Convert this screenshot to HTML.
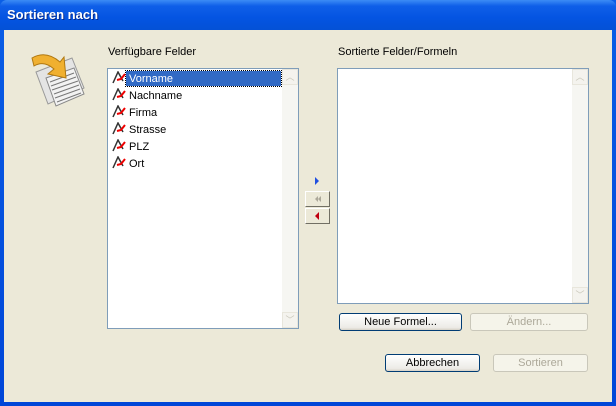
<html><head><style>
body{margin:0;width:616px;height:406px;overflow:hidden;font-family:"Liberation Sans",sans-serif;font-size:11px;}
.win{position:absolute;left:0;top:0;width:616px;height:406px;background:linear-gradient(#0a5ee6,#0046d8);}
.title{position:absolute;left:0;top:0;width:616px;height:30px;background:linear-gradient(#3c8cf5 0,#0f5fe8 20%,#0454e2 60%,#0451d6 100%);border-radius:7px 7px 0 0;}
.title span{position:absolute;left:7px;top:7px;color:#fff;font-weight:bold;font-size:13px;text-shadow:1px 1px #0a2a8a;font-family:"Liberation Sans",sans-serif;}
.client{position:absolute;left:4px;top:30px;width:608px;height:372px;background:#ece9d8;}
.a{position:absolute;}
.list{position:absolute;background:#fff;border:1px solid #7f9db9;}
.sb{position:absolute;right:0;top:0;width:16px;bottom:0;background:#f6f6f2;}
.sbtn{position:absolute;left:0;width:16px;height:16px;background:#f4f3ee;border:1px solid #e8e6dc;box-sizing:border-box;color:#c9c7ba;font-size:9px;text-align:center;line-height:14px;}
.item{position:absolute;left:4px;height:16px;line-height:16px;}
.item i{display:inline-block;width:14px;height:13px;vertical-align:-2px;margin-right:3px;}
.btn{position:absolute;border:1px solid #003c74;border-radius:3px;background:linear-gradient(#fff,#ecebe6 85%,#d6d0c5);text-align:center;box-sizing:border-box;line-height:16px;}
.dis{border-color:#c9c7ba;color:#aca899;background:#f5f4ea;}
.ab{position:absolute;width:25px;height:16px;border:1px solid #fff;border-right-color:#716f64;border-bottom-color:#716f64;box-sizing:border-box;background:#ece9d8;}
</style></head><body>
<div class="win"><div class="title"><span>Sortieren nach</span></div>
<div class="client">
<svg class="a" style="left:20px;top:14px" width="66" height="66" viewBox="0 0 66 66">
<polygon points="12,28 48,14 60,44 24,60" fill="#e4e4e4" stroke="#999"/>
<polygon points="22,34 50,24 60,50 32,62" fill="#f2f2f2" stroke="#888"/>
<g stroke="#777" stroke-width="1"><line x1="26" y1="38" x2="50" y2="29"/><line x1="27" y1="42" x2="52" y2="33"/><line x1="28" y1="46" x2="54" y2="37"/><line x1="30" y1="50" x2="55" y2="41"/><line x1="31" y1="54" x2="56" y2="45"/><line x1="33" y1="58" x2="57" y2="49"/></g>
<path d="M8,14 Q22,6 36,18 L40,13 L42,34 L24,30 L30,25 Q20,16 10,22 Z" fill="#f0b030" stroke="#b07810"/>
</svg>
<div class="a" style="left:104px;top:16px">Verfügbare Felder</div>
<div class="a" style="left:334px;top:16px">Sortierte Felder/Formeln</div>
<div class="list" style="left:103px;top:38px;width:190px;height:259px">
<div class="sb"><div class="sbtn" style="top:0">︿</div><div class="sbtn" style="bottom:0">﹀</div></div>
<div class="a" style="left:18px;top:2px;width:155px;height:15px;background:#316ac5;outline:1px dotted #000"></div>
<div class="item" style="top:2px"><i><svg width="14" height="13"><path d="M1,12 L6,1 L11,10" fill="none" stroke="#333" stroke-width="1.5"/><path d="M5,9 L9,8 L13,3" fill="none" stroke="#e00" stroke-width="2"/></svg></i><span style="color:#fff">Vorname</span></div>
<div class="item" style="top:19px"><i><svg width="14" height="13"><path d="M1,12 L6,1 L11,10" fill="none" stroke="#333" stroke-width="1.5"/><path d="M5,9 L9,8 L13,3" fill="none" stroke="#e00" stroke-width="2"/></svg></i>Nachname</div>
<div class="item" style="top:36px"><i><svg width="14" height="13"><path d="M1,12 L6,1 L11,10" fill="none" stroke="#333" stroke-width="1.5"/><path d="M5,9 L9,8 L13,3" fill="none" stroke="#e00" stroke-width="2"/></svg></i>Firma</div>
<div class="item" style="top:53px"><i><svg width="14" height="13"><path d="M1,12 L6,1 L11,10" fill="none" stroke="#333" stroke-width="1.5"/><path d="M5,9 L9,8 L13,3" fill="none" stroke="#e00" stroke-width="2"/></svg></i>Strasse</div>
<div class="item" style="top:70px"><i><svg width="14" height="13"><path d="M1,12 L6,1 L11,10" fill="none" stroke="#333" stroke-width="1.5"/><path d="M5,9 L9,8 L13,3" fill="none" stroke="#e00" stroke-width="2"/></svg></i>PLZ</div>
<div class="item" style="top:87px"><i><svg width="14" height="13"><path d="M1,12 L6,1 L11,10" fill="none" stroke="#333" stroke-width="1.5"/><path d="M5,9 L9,8 L13,3" fill="none" stroke="#e00" stroke-width="2"/></svg></i>Ort</div>
</div>
<div class="list" style="left:333px;top:38px;width:250px;height:234px">
<div class="sb"><div class="sbtn" style="top:0">︿</div><div class="sbtn" style="bottom:0">﹀</div></div>
</div>
<svg class="a" style="left:310px;top:147px" width="6" height="8"><polygon points="1,0 5,4 1,8" fill="#2050e0"/></svg>
<div class="ab" style="left:301px;top:161px"><svg width="23" height="14"><polygon points="9,7 12,4 12,10" fill="#aca899"/><polygon points="12,7 15,4 15,10" fill="#aca899"/></svg></div>
<div class="ab" style="left:301px;top:178px"><svg width="23" height="14"><polygon points="9,7 13,3 13,11" fill="#c00010"/></svg></div>
<div class="btn" style="left:335px;top:283px;width:123px;height:18px">Neue Formel...</div>
<div class="btn dis" style="left:466px;top:283px;width:118px;height:18px">Ändern...</div>
<div class="btn" style="left:381px;top:324px;width:95px;height:18px">Abbrechen</div>
<div class="btn dis" style="left:489px;top:324px;width:95px;height:18px">Sortieren</div>
</div></div>
</body></html>
